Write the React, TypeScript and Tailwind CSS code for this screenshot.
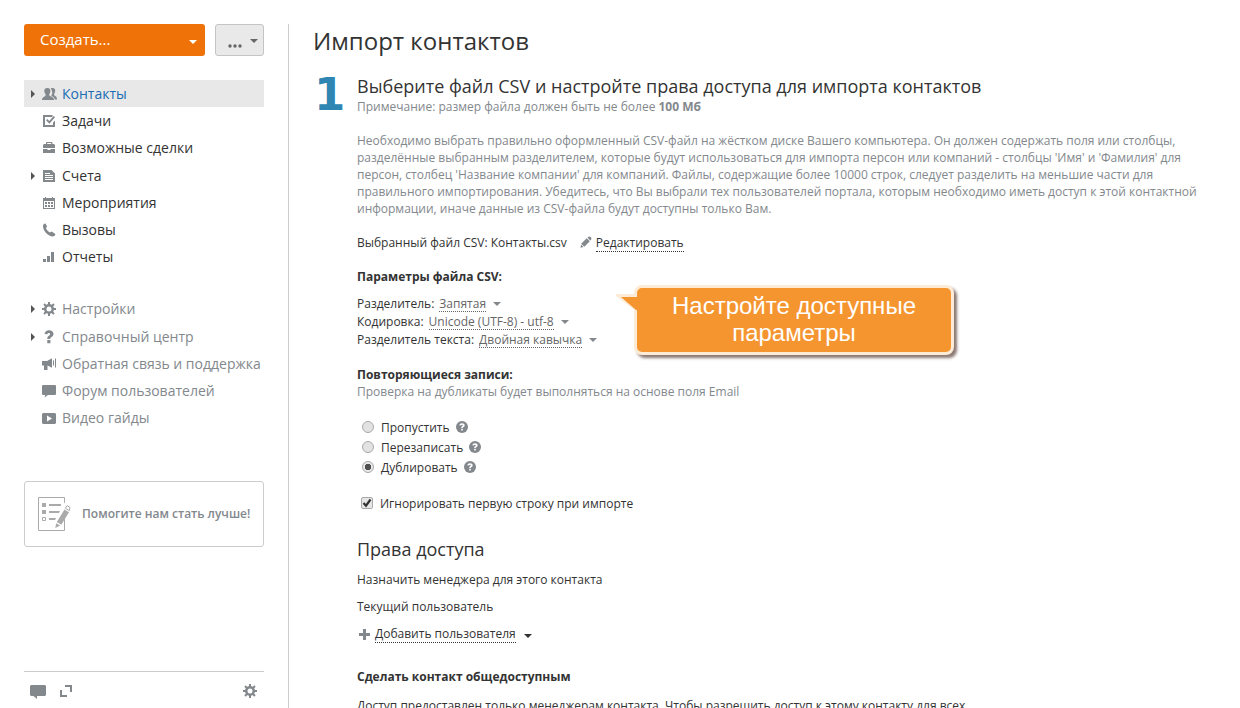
import React from "react";

type IconProps = { className?: string };

const Caret = ({ className = "" }: IconProps) => (
  <svg viewBox="0 0 8 4" className={`h-1 w-2 shrink-0 fill-current ${className}`} aria-hidden="true">
    <path d="M0 0h8L4 4z" />
  </svg>
);

const IconBox = ({ children }: { children: React.ReactNode }) => (
  <svg viewBox="0 0 15 14" className="h-3.5 w-[15px] shrink-0 fill-current text-[#83888d]" aria-hidden="true">
    {children}
  </svg>
);

const GearShape = () => (
  <g transform="translate(7 7)">
    <path
      fillRule="evenodd"
      d="M0-5A5 5 0 1 1 0 5 5 5 0 1 1 0-5zM0-2.500A2.500 2.500 0 1 0 0 2.500 2.500 2.500 0 1 0 0-2.500z"
    />
    {[0, 45, 90, 135, 180, 225, 270, 315].map((a) => (
      <rect key={a} x="-1" y="-7" width="2" height="3" transform={`rotate(${a})`} />
    ))}
  </g>
);

const icons = {
  contacts: (
    <IconBox>
      <path d="M8.800 1.400c.6-.3 1.200-.4 1.800-.4 1.700 0 2.600 1 2.600 2.700 0 1.200-.3 2-.9 2.700-.3.5-.2 1.700.2 2.200.7.7 2.500.9 2.500 3.900h-2.300c-.3-1.700-1.300-2.600-2.900-3.400-.5-.3-.5-.8-.1-1.300.9-1.100.8-4.500-.9-6.400z" />
      <path d="M5.300 1C7.500 1 8.400 2.200 8.400 4c0 1.200-.4 2.200-1 2.900-.3.6-.2 1.500.2 1.900.9.8 4.300 1 4.500 4.200H0c.1-2.900 2.500-3.300 3.300-4.100.4-.4.4-1.400.1-2C2.800 6.200 2.300 5.200 2.300 4c0-1.800.9-3 3-3z" />
    </IconBox>
  ),
  tasks: (
    <IconBox>
      <path d="M1 1h9.500v2H3v8h8V8.500l2-2V13H1z" />
      <path d="M4 6.300l1.300-1.200 2 1.900 4.400-5L13 3.200 7.400 9.800z" />
    </IconBox>
  ),
  deals: (
    <IconBox>
      <path fillRule="evenodd" d="M4 3V1.500L5 1h4.500l1 .5V3H12l1 1v3H1V4l1-1zm1.200 0h4V2h-4z" />
      <path d="M1 8h4.500v1h3V8H13v4H1z" />
    </IconBox>
  ),
  invoices: (
    <IconBox>
      <path fillRule="evenodd" d="M1 1h8.500L13 4.500V13H1zm2 3v1h5V4zm0 2v1h8V6zm0 2v1h8V8zm0 2v1h8v-1z" />
    </IconBox>
  ),
  events: (
    <IconBox>
      <path fillRule="evenodd" d="M1 2h2V1h1v1h6V1h1v1h2v11H1zm1 3v7h10V5z" />
      <path d="M3 6h2v2H3zm3 0h2v2H6zm3 0h2v2H9zM3 9h2v2H3zm3 0h2v2H6zm3 0h2v2H9z" />
    </IconBox>
  ),
  calls: (
    <IconBox>
      <path d="M2.300.8l1.200-.3 1.700 3.200-1.300 1.400c.7 1.900 2 3.400 4 4.500l1.800-1 3.700 2.300c.1 1-1.200 2.600-2.700 2.600C6.500 13.500 1.200 8.200 1 3.500c0-1.300.4-2.200 1.300-2.700z" />
    </IconBox>
  ),
  reports: (
    <IconBox>
      <path d="M1 9h3v3H1zM5 6h3v6H5zM9 2h3v10H9z" />
    </IconBox>
  ),
  gear: (
    <IconBox>
      <GearShape />
    </IconBox>
  ),
  help: (
    <IconBox>
      <path d="M2.500 3.900C2.900 1.600 4.600.2 7 .2c2.700 0 4.500 1.500 4.500 3.700 0 1.500-.8 2.400-2 3.200-.9.600-1.200.9-1.200 1.900H5.300c0-1.700.4-2.500 1.600-3.300.8-.6 1.200-1 1.200-1.700 0-.7-.5-1.100-1.200-1.100-.9 0-1.400.5-1.600 1.400zM5.300 10h3.100v3.200H5.300z" />
    </IconBox>
  ),
  feedback: (
    <IconBox>
      <path d="M0 4h5l5-2.800v9.600L5.500 8.600V13H2V8.500H0z" />
      <path d="M11 3.500h1v5h-1zM13 1.500h1v9h-1z" />
    </IconBox>
  ),
  forum: (
    <IconBox>
      <path d="M.8 1h12.400l.8.8v8.400l-.8.800H6l-3.500 2.500L3.300 11H.8L0 10.200V1.800z" />
    </IconBox>
  ),
  video: (
    <IconBox>
      <path fillRule="evenodd" d="M1 2h12l1 1v9l-1 1H1l-1-1V3zM5 4.500v6l5-3z" />
    </IconBox>
  ),
};

type NavItem = { label: string; icon: keyof typeof icons; expandable?: boolean; active?: boolean };

const modules: NavItem[] = [
  { label: "Контакты", icon: "contacts", expandable: true, active: true },
  { label: "Задачи", icon: "tasks" },
  { label: "Возможные сделки", icon: "deals" },
  { label: "Счета", icon: "invoices", expandable: true },
  { label: "Мероприятия", icon: "events" },
  { label: "Вызовы", icon: "calls" },
  { label: "Отчеты", icon: "reports" },
];

const service: NavItem[] = [
  { label: "Настройки", icon: "gear", expandable: true },
  { label: "Справочный центр", icon: "help", expandable: true },
  { label: "Обратная связь и поддержка", icon: "feedback" },
  { label: "Форум пользователей", icon: "forum" },
  { label: "Видео гайды", icon: "video" },
];

function NavList({ items, muted = false }: { items: NavItem[]; muted?: boolean }) {
  return (
    <ul>
      {items.map((item) => (
        <li key={item.label} className={item.expandable ? "not-first:mt-px" : ""}>
          <a
            href="#"
            className={`flex h-[27px] items-center pl-[7px] text-sm whitespace-nowrap ${
              item.active ? "bg-[#e8e8e8] text-[#1a6db3]" : muted ? "text-[#83888d]" : "text-[#333]"
            }`}
          >
            <span className="flex w-[11px] shrink-0">
              {item.expandable && (
                <svg viewBox="0 0 4 8" className="h-2 w-1 fill-[#555]" aria-hidden="true">
                  <path d="M0 0l4 4-4 4z" />
                </svg>
              )}
            </span>
            {icons[item.icon]}
            <span className="ml-[5px]">{item.label}</span>
          </a>
        </li>
      ))}
    </ul>
  );
}

function Sidebar() {
  return (
    <aside className="flex w-60 shrink-0 flex-col">
      <div className="flex gap-2.5">
        <button className="flex h-8 flex-1 items-center justify-between rounded-[3px] bg-[#ee7208] pr-2 pb-px pl-4 text-[15px] font-medium text-white">
          Создать...
          <Caret className="mt-1" />
        </button>
        <button
          aria-label="Другие действия"
          className="flex h-8 w-[49px] items-center justify-between rounded-[3px] border border-[#c4c4c4] bg-[#e9e9e9] pr-[5px] pl-3 text-[#666]"
        >
          <svg viewBox="0 0 14 4" className="mt-3 h-1 w-3.5 fill-current" aria-hidden="true">
            <circle cx="2" cy="2" r="1.700" />
            <circle cx="7" cy="2" r="1.700" />
            <circle cx="12" cy="2" r="1.700" />
          </svg>
          <Caret className="mt-0.5" />
        </button>
      </div>

      <nav className="mt-6 flex flex-col gap-[25px]">
        <NavList items={modules} />
        <NavList items={service} muted />
      </nav>

      <a
        href="#"
        className="mt-[50px] flex h-[66px] items-center rounded-[3px] border border-[#ccc] pl-[13px] text-xs font-semibold whitespace-nowrap text-[#83888d]"
      >
        <svg viewBox="0 0 33 34" className="mr-[11px] h-[34px] w-[33px] shrink-0" aria-hidden="true">
          <path fill="none" stroke="#aaa" d="M.5.5h26v33H.5z" />
          <path fill="#aaa" d="M4 6h4v4H4zM4 13h4v4H4zM11 7h12v2H11zM11 14h11v2H11zM11 21h8v2h-8z" />
          <path fill="none" stroke="#aaa" d="M4.500 20.500h3v3h-3z" />
          <path fill="#fff" d="M27 5l7 4-11 19-7 4 1-9z" />
          <path fill="#aaa" d="M26.500 12.500l4.500 2.700-7.700 12.600-4.500-2.700zM18.200 26.200l4 2.400-4.900 2.300z" />
          <path fill="#fff" stroke="#aaa" d="M27.300 11.200l1.700-2.600 3 1.800-.7 3.200z" />
        </svg>
        Помогите нам стать лучше!
      </a>

      <div className="mt-auto flex h-[37px] items-center border-t border-[#ccc] pr-[7px] pl-1.5 text-[#83888d]">
        <button aria-label="Чат">
          <svg viewBox="0 0 16 14" className="mt-1 h-3.5 w-4 fill-current" aria-hidden="true">
            <path d="M1 0h14l1 1v9l-1 1H7v3l-3.500-3H1l-1-1V1z" />
          </svg>
        </button>
        <button aria-label="Развернуть" className="ml-3.5">
          <svg viewBox="0 0 12 12" className="mt-px h-3 w-3 fill-current" aria-hidden="true">
            <path d="M5 0h7v7h-2V2H5zM0 5h2v5h5v2H0z" />
          </svg>
        </button>
        <button aria-label="Параметры" className="ml-auto">
          <svg viewBox="0 0 14 14" className="mt-px h-3.5 w-3.5 fill-current" aria-hidden="true">
            <GearShape />
          </svg>
        </button>
      </div>
    </aside>
  );
}

const csvOptions = [
  { id: "delimiter", label: "Разделитель:", values: ["Запятая"] },
  { id: "encoding", label: "Кодировка:", values: ["Unicode (UTF-8) - utf-8"] },
  { id: "quote", label: "Разделитель текста:", values: ["Двойная кавычка"] },
];

function Callout() {
  return (
    <div className="absolute -top-[9px] left-[277px] w-[320px] rounded-lg border-3 border-[#fdebd6] bg-[#f5952f] pt-1 pb-1.5 text-center font-['Liberation_Sans',sans-serif] text-2xl leading-[27px] text-white shadow-[3px_3px_3px_rgba(60,30,20,0.6)]">
      <svg viewBox="0 0 24 20" className="absolute top-1 -left-[21px] h-5 w-6" aria-hidden="true">
        <path fill="#fdebd6" d="M0 2h20v17L0 4z" />
        <path fill="#f5952f" d="M5 5h19v13h-4z" />
      </svg>
      Настройте доступные
      <br />
      параметры
    </div>
  );
}

function Hint() {
  return (
    <button aria-label="Справка" className="ml-1.5">
      <svg viewBox="0 0 12 12" className="h-3 w-3" aria-hidden="true">
        <circle cx="6" cy="6" r="6" fill="#83888d" />
        <path
          fill="#fff"
          d="M3.300 4.300C3.500 2.900 4.500 2.200 6 2.200c1.600 0 2.700.8 2.700 2 0 .9-.5 1.400-1.200 1.900-.5.4-.7.6-.7 1.100H5.200c0-1 .2-1.500.9-2 .5-.3.7-.5.7-.9S6.500 3.700 6 3.700s-.8.300-.9.900zM5.200 8h1.600v1.600H5.200z"
        />
      </svg>
    </button>
  );
}

function ImportPage() {
  const [mode, setMode] = React.useState("Дублировать");
  return (
    <main className="min-w-0 flex-1 overflow-y-auto border-l border-[#ccc] pl-6 text-xs leading-[17px] [scrollbar-width:none]">
      <h1 className="text-2xl leading-[34px]">Импорт контактов</h1>
      <section className="mt-[17px] flex">
        <div className="w-11 shrink-0 pt-[3px] pl-px font-['DejaVu_Sans',sans-serif] text-[45px] leading-[34px] font-bold text-[#2f86b3]">
          1
        </div>
        <div className="min-w-0 flex-1">
          <h2 className="text-lg leading-[22px]">
            Выберите файл CSV и настройте права доступа для импорта контактов
          </h2>
          <p className="mt-px text-[#83888d]">
            Примечание: размер файла должен быть не более <b>100 Мб</b>
          </p>
          <p className="mt-[17px] pr-3 text-[#83888d]">
            Необходимо выбрать правильно оформленный CSV-файл на жёстком диске Вашего компьютера. Он должен содержать
            поля или столбцы, разделённые выбранным разделителем, которые будут использоваться для импорта персон или
            компаний - столбцы 'Имя' и 'Фамилия' для персон, столбец 'Название компании' для компаний. Файлы,
            содержащие более 10000 строк, следует разделить на меньшие части для правильного импортирования. Убедитесь,
            что Вы выбрали тех пользователей портала, которым необходимо иметь доступ к этой контактной информации,
            иначе данные из CSV-файла будут доступны только Вам.
          </p>

          <div className="mt-4 flex h-[18px] items-center">
            Выбранный файл CSV: Контакты.csv
            <svg viewBox="0 0 12 12" className="ml-[13px] h-3 w-3 shrink-0 fill-[#83888d]" aria-hidden="true">
              <path d="M8.500.8L10 .5l1.500 1.500-.3 1.500-1 1L7.500 1.800zM6.700 2.200L9.800 5.300 4.300 10.800 1.200 7.700zM1 8.500L3.500 11l-3 .8z" />
            </svg>
            <a href="#" className="mt-px ml-1 border-b border-dotted border-[#333]">
              Редактировать
            </a>
          </div>

          <h3 className="mt-[17px] font-bold">Параметры файла CSV:</h3>
          <div className="relative mt-[9px]">
            {csvOptions.map((o) => (
              <div key={o.id} className="flex h-[18px] items-center">
                <label htmlFor={o.id}>{o.label}</label>
                <select
                  id={o.id}
                  className="ml-[5px] h-[17px] appearance-none border-b border-dotted border-[#666] bg-transparent p-0 text-[#666] [field-sizing:content]"
                >
                  {o.values.map((v) => (
                    <option key={v}>{v}</option>
                  ))}
                </select>
                <Caret className="mt-px ml-[7px] text-[#83888d]" />
              </div>
            ))}
            <Callout />
          </div>

          <h3 className="mt-[18px] font-bold">Повторяющиеся записи:</h3>
          <p className="text-[#83888d]">Проверка на дубликаты будет выполняться на основе поля Email</p>
          <div className="mt-[17px]">
            {["Пропустить", "Перезаписать", "Дублировать"].map((m) => (
              <div key={m} className="flex h-5 items-center pl-[5px]">
                <label className="flex items-center">
                  <input
                    type="radio"
                    name="duplicates"
                    checked={mode === m}
                    onChange={() => setMode(m)}
                    className="mr-[7px] h-3 w-3 appearance-none rounded-full border border-[#aaa] bg-[#e2e2e2] checked:bg-[radial-gradient(circle,#505050_0_3px,#e8e8e8_3px)]"
                  />
                  {m}
                </label>
                <Hint />
              </div>
            ))}
          </div>
          <label className="mt-4 flex h-5 items-center pl-1">
            <span className="relative mr-[7px] flex">
              <input
                type="checkbox"
                defaultChecked
                className="peer h-3 w-3 appearance-none rounded-xs border border-[#aaa] bg-[#e6e6e6]"
              />
              <svg
                viewBox="0 0 12 12"
                className="pointer-events-none invisible absolute inset-0 h-3 w-3 peer-checked:visible"
                aria-hidden="true"
              >
                <path fill="none" stroke="#333" strokeWidth="2.200" d="M2.500 6L5 8.700 9.500 2.500" />
              </svg>
            </span>
            Игнорировать первую строку при импорте
          </label>

          <h2 className="mt-[25px] text-lg leading-[22px]">Права доступа</h2>
          <p className="mt-[11px]">Назначить менеджера для этого контакта</p>
          <p className="mt-2.5">Текущий пользователь</p>
          <button className="mt-2.5 flex h-[18px] items-center pl-0.5">
            <svg viewBox="0 0 11 11" className="mr-[5px] h-[11px] w-[11px] fill-[#83888d]" aria-hidden="true">
              <path d="M4 0h3v4h4v3H7v4H4V7H0V4h4z" />
            </svg>
            <span className="border-b border-dotted border-[#333]">Добавить пользователя</span>
            <Caret className="mt-1 ml-2" />
          </button>
          <h3 className="mt-[25px] font-bold">Сделать контакт общедоступным</h3>
          <p className="mt-3">
            Доступ предоставлен только менеджерам контакта. Чтобы разрешить доступ к этому контакту для всех
          </p>
        </div>
      </section>
    </main>
  );
}

export default function App() {
  return (
    <div className="flex h-screen gap-6 overflow-hidden bg-white px-6 pt-6 font-['Open_Sans',sans-serif] text-[#333]">
      <Sidebar />
      <ImportPage />
    </div>
  );
}
